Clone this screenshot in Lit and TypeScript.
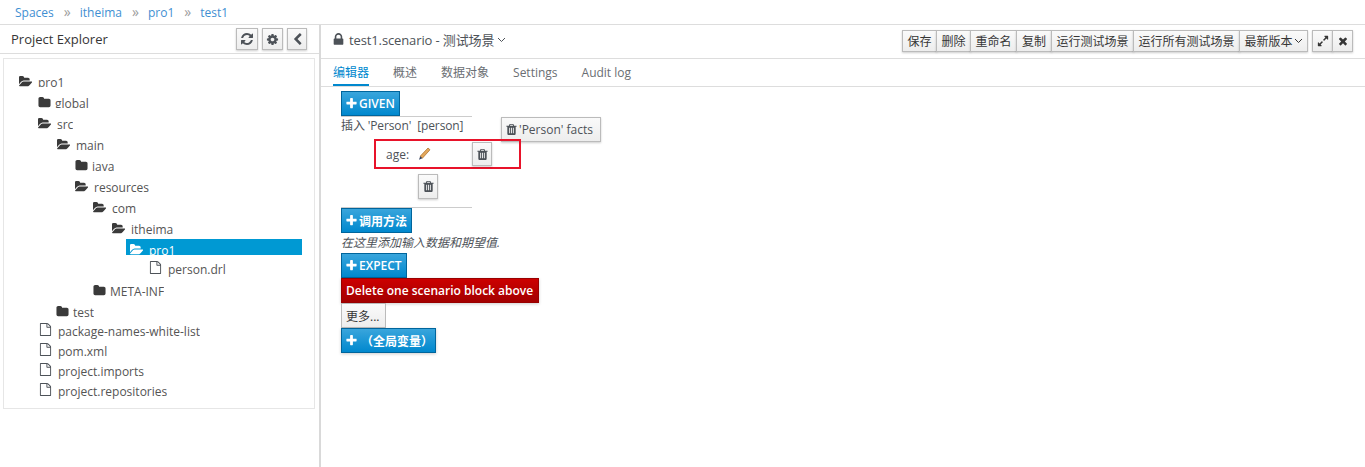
import { LitElement, html, css, svg } from "lit";
import { customElement } from "lit/decorators.js";

const P: Record<string, string> = {
  open: "M1815 952q0 31-31 66l-336 396q-43 51-120.5 86.5t-143.5 35.5h-1088q-34 0-60.5-13t-26.5-43q0-31 31-66l336-396q43-51 120.5-86.5t143.5-35.5h1088q34 0 60.5 13t26.5 43zm-343-344v160h-832q-94 0-197 47.5t-164 119.5l-337 396-5 6q0-4-.5-12.5t-.5-12.5v-960q0-92 66-158t158-66h320q92 0 158 66t66 158v32h544q92 0 158 66t66 158z",
  folder: "M1728 608v704q0 92-66 158t-158 66h-1216q-92 0-158-66t-66-158v-960q0-92 66-158t158-66h320q92 0 158 66t66 158v32h672q92 0 158 66t66 158z",
  file: "M1596 380q28 28 48 76t20 88v1152q0 40-28 68t-68 28h-1344q-40 0-68-28t-28-68v-1600q0-40 28-68t68-28h896q40 0 88 20t76 48zm-444-244v376h376q-10-29-22-41l-313-313q-12-12-41-22zm384 1528v-1024h-416q-40 0-68-28t-28-68v-416h-768v1536h1280z",
  trash: "M704 1376v-704q0-14-9-23t-23-9h-64q-14 0-23 9t-9 23v704q0 14 9 23t23 9h64q14 0 23-9t9-23zm256 0v-704q0-14-9-23t-23-9h-64q-14 0-23 9t-9 23v704q0 14 9 23t23 9h64q14 0 23-9t9-23zm256 0v-704q0-14-9-23t-23-9h-64q-14 0-23 9t-9 23v704q0 14 9 23t23 9h64q14 0 23-9t9-23zm-544-992h448l-48-117q-7-9-17-11h-317q-10 2-17 11zm928 32v64q0 14-9 23t-23 9h-96v948q0 83-47 143.5t-113 60.5h-832q-66 0-113-58.5t-47-141.5v-952h-96q-14 0-23-9t-9-23v-64q0-14 9-23t23-9h309l70-167q15-37 54-63t79-26h320q40 0 79 26t54 63l70 167h309q14 0 23 9t9 23z",
  plus: "M1600 736v192q0 40-28 68t-68 28h-416v416q0 40-28 68t-68 28h-192q-40 0-68-28t-28-68v-416h-416q-40 0-68-28t-28-68v-192q0-40 28-68t68-28h416v-416q0-40 28-68t68-28h192q40 0 68 28t28 68v416h416q40 0 68 28t28 68z",
  times: "M1490 1322q0 40-28 68l-136 136q-28 28-68 28t-68-28l-294-294-294 294q-28 28-68 28t-68-28l-136-136q-28-28-28-68t28-68l294-294-294-294q-28-28-28-68t28-68l136-136q28-28 68-28t68 28l294 294 294-294q28-28 68-28t68 28l136 136q28 28 28 68t-28 68l-294 294 294 294q28 28 28 68z",
  left: "M1427 301l-531 531 531 531q19 19 19 45t-19 45l-166 166q-19 19-45 19t-45-19l-742-742q-19-19-19-45t19-45l742-742q19-19 45-19t45 19l166 166q19 19 19 45t-19 45z",
  refresh: "M1639 1056q0 5-1 7-64 268-268 434.5t-478 166.5q-146 0-282.5-55t-243.5-157l-129 129q-19 19-45 19t-45-19-19-45v-448q0-26 19-45t45-19h448q26 0 45 19t19 45-19 45l-137 137q71 66 161 102t187 36q134 0 250-65t186-179q11-17 53-117 8-23 30-23h192q13 0 22.5 9.5t9.5 22.5zm25-800v448q0 26-19 45t-45 19h-448q-26 0-45-19t-19-45 19-45l138-138q-148-137-349-137-134 0-250 65t-186 179q-11 17-53 117-8 23-30 23h-199q-13 0-22.5-9.5t-9.5-22.5v-7q65-268 270-434.5t480-166.5q146 0 284 55.5t245 156.5l130-129q19-19 45-19t45 19 19 45z",
  cog: "M1152 896q0-106-75-181t-181-75-181 75-75 181 75 181 181 75 181-75 75-181zm512-109v222q0 12-8 23t-20 13l-185 28q-19 54-39 91 35 50 107 138 10 12 10 25t-9 23q-27 37-99 108t-94 71q-12 0-26-9l-138-108q-44 23-91 38-16 136-29 186-7 28-36 28h-222q-14 0-24.5-8.5t-11.5-21.5l-28-184q-49-16-90-37l-141 107q-10 9-25 9-14 0-25-11-126-114-165-168-7-10-7-23 0-12 8-23 15-21 51-66.5t54-70.5q-27-50-41-99l-183-27q-13-2-21-12.5t-8-23.5v-222q0-12 8-23t19-13l186-28q14-46 39-92-40-57-107-138-10-12-10-24 0-10 9-23 26-36 98.5-107.5t94.5-71.5q13 0 26 10l138 107q44-23 91-38 16-136 29-186 7-28 36-28h222q14 0 24.5 8.5t11.5 21.5l28 184q49 16 90 37l142-107q9-9 24-9 13 0 25 10 129 119 165 170 7 8 7 22 0 12-8 23-15 21-51 66.5t-54 70.5q26 50 41 98l183 28q13 2 21 12.5t8 23.5z",
  lock: "M640 768h512v-192q0-106-75-181t-181-75-181 75-75 181v192zm832 96v576q0 40-28 68t-68 28h-960q-40 0-68-28t-28-68v-576q0-40 28-68t68-28h32v-192q0-184 132-316t316-132 316 132 132 316v192h32q40 0 68 28t28 68z",
  expand: "M883 1056q0 13-10 23l-332 332 144 144q19 19 19 45t-19 45-45 19h-448q-26 0-45-19t-19-45v-448q0-26 19-45t45-19 45 19l144 144 332-332q10-10 23-10t23 10l114 114q10 10 10 23zm781-864v448q0 26-19 45t-45 19-45-19l-144-144-332 332q-10 10-23 10t-23-10l-114-114q-10-10-10-23t10-23l332-332-144-144q-19-19-19-45t19-45 45-19h448q26 0 45 19t19 45z",
};

const icon = (n: string, s: number) => html`<svg class="ic" width=${s} height=${s} viewBox="0 0 1792 1792" fill="currentColor">${svg`<path d=${P[n]}></path>`}</svg>`;
const caret = () => html`<svg class="caret" width="9" height="6" viewBox="0 0 9 6" fill="none" stroke="currentColor" stroke-width="1">${svg`<path d="M1 1l3.5 3.5L8 1"></path>`}</svg>`;
const pencil = () => html`<svg width="13" height="14" viewBox="0 0 13 14">${svg`<path d="M10 1l2 1.8-7.6 8.4-2.2-2z" fill="#e3a85c" stroke="#a86a22" stroke-width=".7"></path><path d="M2.2 9.2l2.2 2-3.4 1.6z" fill="#33405f"></path>`}</svg>`;

type Node = { x: number; h: number; i: string; label: string; pt?: number; clip?: boolean; sel?: boolean };
const tree: Node[] = [
  { x: 15, h: 21, i: "open", label: "pro1", clip: true },
  { x: 34, h: 21, i: "folder", label: "global", clip: true },
  { x: 34, h: 21, i: "open", label: "src" },
  { x: 53, h: 21, i: "open", label: "main" },
  { x: 71, h: 21, i: "folder", label: "java", clip: true },
  { x: 71, h: 21, i: "open", label: "resources" },
  { x: 89, h: 21, i: "open", label: "com" },
  { x: 108, h: 18, i: "open", label: "itheima" },
  { x: 126, h: 16, i: "open", label: "pro1", pt: 3, clip: true, sel: true },
  { x: 145, h: 28, i: "file", label: "person.drl", pt: 6 },
  { x: 89, h: 21, i: "folder", label: "META-INF" },
  { x: 52, h: 19, i: "folder", label: "test" },
  { x: 35, h: 20, i: "file", label: "package-names-white-list" },
  { x: 35, h: 20, i: "file", label: "pom.xml" },
  { x: 35, h: 20, i: "file", label: "project.imports" },
  { x: 35, h: 20, i: "file", label: "project.repositories" },
];

const actions: [string, number][] = [
  ["保存", 35], ["删除", 35], ["重命名", 47], ["复制", 36], ["运行测试场景", 83], ["运行所有测试场景", 107],
];

@customElement("app-root")
export class AppRoot extends LitElement {
  static styles = css`
    :host { display: block; width: 1365px; height: 467px; overflow: hidden; background: #fff; color: #4d5258;
      font-family: "Open Sans", "Noto Sans CJK SC", sans-serif; font-size: 12px; }
    .ic { display: block; flex: none; }
    .crumbs { height: 24px; border-bottom: 1px solid #ddd; display: flex; align-items: center; padding-left: 15px; color: #3f8fd2; gap: 10px; }
    .crumbs .sep { color: #9c9c9c; font-size: 14px; line-height: 14px; width: 6px; }
    .main { display: flex; height: 442px; }
    .left { width: 319px; flex: none; border-right: 2px solid #d9d9d9; }
    .lhead { height: 28px; border-bottom: 1px solid #ddd; display: flex; align-items: center; padding: 0 12px 0 11px; color: #363636; font-size: 13px; }
    .lhead .name { flex: 1; }
    .lhead .tools { display: flex; gap: 4px; }
    .btn { box-sizing: border-box; display: flex; align-items: center; justify-content: center; border: 1px solid #bbb; color: #4d5258;
      background: linear-gradient(#fafafa, #ededed); box-shadow: 0 1px 2px rgba(3,3,3,.2); }
    .tool { width: 21px; height: 22px; }
    .tool.w22 { width: 22px; }
    .tool.w20 { width: 20px; }
    .panel { margin: 4px 4px 0 3px; border: 1px solid #e6e6e6; height: 334px; padding-top: 15px; }
    .row { display: flex; align-items: flex-start; box-sizing: border-box; color: #545454; overflow: hidden; line-height: 17px; font-size: 12px; }
    .row .ico { width: 14px; flex: none; color: #3a3a3a; padding-top: 1px; }
    .row .ico.file { color: #4d5258; padding-top: 0; }
    .row .lab { margin-left: 5px; white-space: nowrap; height: 20px; overflow: hidden; }
    .row .lab.shut { margin-left: 3px; }
    .row .lab.clip { height: 13px; }
    .row.sel { width: 176px; background: #0099d3; color: #fff; }
    .row.sel .ico { color: #fff; }
    .right { flex: 1; min-width: 0; }
    .title { height: 33px; border-bottom: 1px solid #ddd; display: flex; align-items: center; padding: 0 12px 0 10px; }
    .doc { flex: 1; display: flex; align-items: center; gap: 3px; font-size: 13px; color: #4d5258; padding-bottom: 5px; }
    .doc .name { letter-spacing: -0.12px; }
    .caret { flex: none; }
    .doc .caret { margin-top: 2px; }
    .bar { display: flex; gap: 5px; margin-bottom: 1px; }
    .group { display: flex; }
    .group .btn { height: 22px; margin-left: -1px; padding: 0; white-space: nowrap; color: #363636; }
    .group .wide { gap: 1px; width: 69px; }
    .group .sq { width: 21px; }
    .tabs { height: 27px; border-bottom: 1px solid #ddd; display: flex; padding-left: 12px; gap: 24px; }
    .tab { height: 27px; box-sizing: border-box; line-height: 28px; color: #6a6e73; }
    .tab.on { color: #0088ce; border-bottom: 2px solid #0088ce; }
    .content { padding: 4px 0 0 20px; display: flex; flex-direction: column; align-items: flex-start; }
    .cbtn { box-sizing: border-box; height: 25px; display: flex; align-items: center; gap: 1px; padding: 0 4px 0 3px; color: #fff; font-weight: 600; white-space: nowrap;
      border: 1px solid #00659c; background: linear-gradient(#39a5dc, #0088ce); }
    .cbtn.red { border-color: #990000; background: linear-gradient(#cc0000, #a30000); padding: 0 5px 0 4px; box-shadow: 0 1px 3px rgba(3,3,3,.2); }
    .cbtn.gray { color: #363636; font-weight: 400; border-color: #bbb; background: linear-gradient(#fafafa, #ededed); padding: 0 6px 0 4px; }
    .cbtn.sp { gap: 3px; padding-right: 2px; box-shadow: 0 1px 3px rgba(3,3,3,.2); }
    .rule { width: 131px; height: 1px; background: #ccc; flex: none; }
    .block { height: 90px; width: 300px; }
    .fact { display: flex; align-items: flex-start; height: 23px; }
    .fact .txt { width: 160px; line-height: 18px; white-space: nowrap; color: #4d5258; letter-spacing: -0.12px; }
    .facts { height: 25px; width: 100px; gap: 1px; color: #4d5258; justify-content: flex-start; padding-left: 3px; }
    .hl { position: relative; width: 147px; height: 30px; margin: -1px 0 0 33px; border: 2px solid #e8132a; box-sizing: border-box; display: flex; align-items: center; padding-left: 10px; color: #4d5258; }
    .hl .k { width: 32px; }
    .hl .pen { width: 54px; display: flex; }
    .tr { width: 20px; height: 24px; }
    .tr2 { width: 20px; height: 25px; margin: 5px 0 0 77px; }
    .hint { height: 20px; line-height: 20px; font-style: italic; color: #4d5258; }
  `;

  private renderRow(n: Node) {
    const isFile = n.i === "file";
    const shut = n.i === "folder";
    const inset = n.sel ? 4 : n.x;
    const outer = n.sel ? n.x - 4 : 0;
    return html`<div class="row ${n.sel ? "sel" : ""}" style="height:${n.h}px;margin-left:${outer}px;padding-left:${inset}px;padding-top:${n.pt ?? 0}px">
      <span class="ico ${isFile ? "file" : ""}">${icon(n.i, 13)}</span>
      <span class="lab ${n.clip ? "clip" : ""} ${shut ? "shut" : ""}">${n.label}</span>
    </div>`;
  }

  render() {
    return html`
      <div class="crumbs"><span>Spaces</span><span class="sep">»</span><span>itheima</span><span class="sep">»</span><span>pro1</span><span class="sep">»</span><span>test1</span></div>
      <div class="main">
        <div class="left">
          <div class="lhead"><span class="name">Project Explorer</span>
            <div class="tools">
              <div class="btn tool w22">${icon("refresh", 14)}</div>
              <div class="btn tool">${icon("cog", 13)}</div>
              <div class="btn tool w20">${icon("left", 13)}</div>
            </div>
          </div>
          <div class="panel">${tree.map((n) => this.renderRow(n))}</div>
        </div>
        <div class="right">
          <div class="title">
            <div class="doc">${icon("lock", 15)}<span class="name">test1.scenario - 测试场景</span>${caret()}</div>
            <div class="bar">
              <div class="group">
                ${actions.map(([t, w]) => html`<div class="btn" style="width:${w}px">${t}</div>`)}
                <div class="btn wide">最新版本${caret()}</div>
              </div>
              <div class="group">
                <div class="btn sq">${icon("expand", 12)}</div>
                <div class="btn sq">${icon("times", 12)}</div>
              </div>
            </div>
          </div>
          <div class="tabs">
            <div class="tab on">编辑器</div><div class="tab">概述</div><div class="tab">数据对象</div><div class="tab">Settings</div><div class="tab">Audit log</div>
          </div>
          <div class="content">
            <div class="cbtn">${icon("plus", 13)}GIVEN</div>
            <div class="rule"></div>
            <div class="block">
              <div class="fact"><span class="txt">插入 'Person' &nbsp;[person]</span><div class="btn facts">${icon("trash", 13)}'Person' facts</div></div>
              <div class="hl"><span class="k">age:</span><span class="pen">${pencil()}</span><div class="btn tr">${icon("trash", 13)}</div></div>
              <div class="btn tr2">${icon("trash", 13)}</div>
            </div>
            <div class="rule"></div>
            <div class="cbtn">${icon("plus", 13)}调用方法</div>
            <div class="hint">在这里添加输入数据和期望值.</div>
            <div class="cbtn">${icon("plus", 13)}EXPECT</div>
            <div class="cbtn red">Delete one scenario block above</div>
            <div class="cbtn gray">更多...</div>
            <div class="cbtn sp">${icon("plus", 13)}（全局变量）</div>
          </div>
        </div>
      </div>
    `;
  }
}
